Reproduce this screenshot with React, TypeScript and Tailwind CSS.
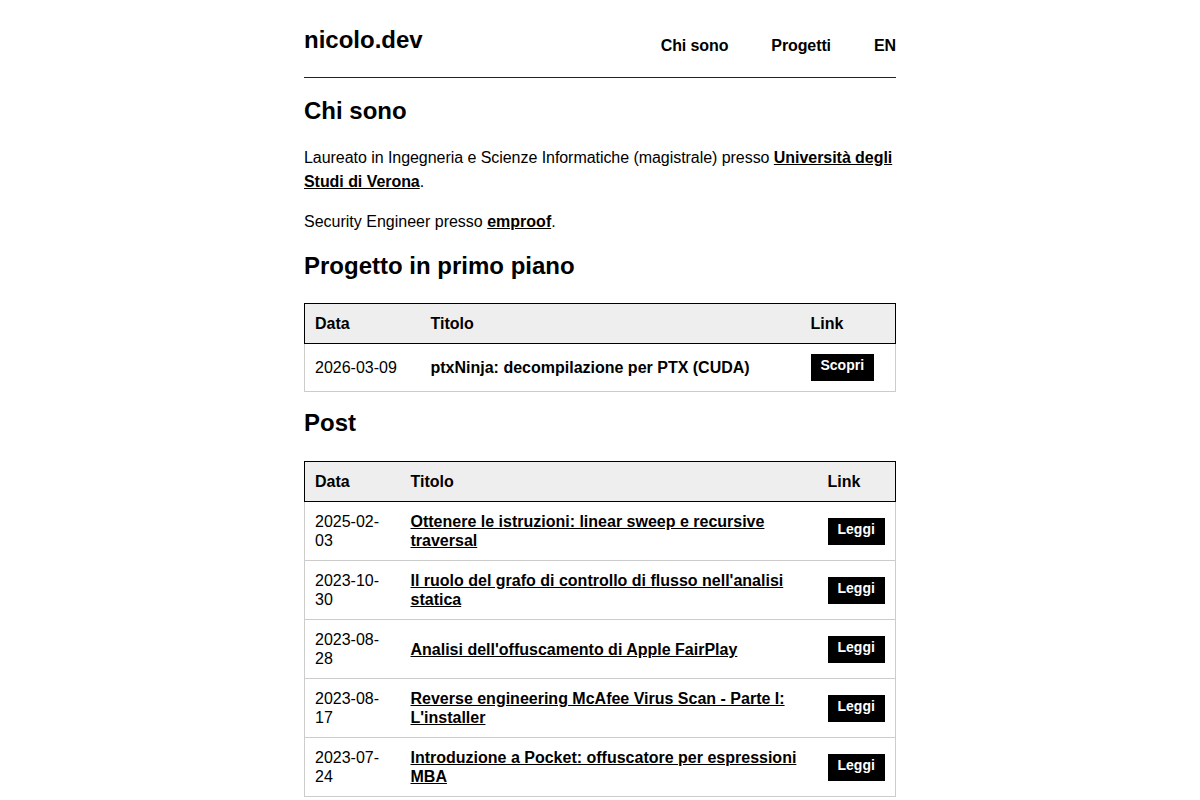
const posts = [
  { date: "2025-02-03", title: "Ottenere le istruzioni: linear sweep e recursive traversal" },
  { date: "2023-10-30", title: "Il ruolo del grafo di controllo di flusso nell'analisi statica" },
  { date: "2023-08-28", title: "Analisi dell'offuscamento di Apple FairPlay" },
  { date: "2023-08-17", title: "Reverse engineering McAfee Virus Scan - Parte I: L'installer" },
  { date: "2023-07-24", title: "Introduzione a Pocket: offuscatore per espressioni MBA" },
];

const Button = ({ label }: { label: string }) => (
  <a href="#" className="inline-block bg-black text-white font-bold text-[14px] leading-[17px] px-[10px] pt-[3px] pb-[7px] align-middle">
    {label}
  </a>
);

export default function App() {
  return (
    <div className="min-h-screen bg-white text-black font-['Liberation_Sans',Arial,sans-serif]">
      <div className="w-[592px] mx-auto">
        <header className="flex justify-between items-end pt-[26px] pb-[22px] border-b border-[#222]">
          <a href="#" className="text-[24px] leading-[1.2] font-bold">nicolo.dev</a>
          <nav className="flex gap-[43px] text-[16px] leading-[1.2] font-bold tracking-[-0.1px]">
            <a href="#">Chi sono</a>
            <a href="#">Progetti</a>
            <a href="#">EN</a>
          </nav>
        </header>

        <main className="text-[16px]">
          <h2 className="text-[24px] leading-[1.2] font-bold mt-[19px] mb-[20px]">Chi sono</h2>
          <p className="leading-[24px] tracking-[-0.05px]">
            Laureato in Ingegneria e Scienze Informatiche (magistrale) presso{" "}
            <a href="#" className="font-bold underline">Università degli Studi di Verona</a>.
          </p>
          <p className="leading-[24px] mt-[16px]">
            Security Engineer presso <a href="#" className="font-bold underline">emproof</a>.
          </p>

          <h2 className="text-[24px] leading-[1.2] font-bold mt-[18px] mb-[23px]">Progetto in primo piano</h2>
          <table className="w-full border-collapse leading-[19px] text-left">
            <thead>
              <tr className="bg-[#eee] border border-black">
                <th className="w-[116px] p-[10px] font-bold">Data</th>
                <th className="p-[10px] font-bold">Titolo</th>
                <th className="w-[95px] p-[10px] font-bold">Link</th>
              </tr>
            </thead>
            <tbody>
              <tr className="border border-[#ccc]">
                <td className="p-[10px]">2026-03-09</td>
                <td className="p-[10px] font-bold">ptxNinja: decompilazione per PTX (CUDA)</td>
                <td className="p-[10px]"><Button label="Scopri" /></td>
              </tr>
            </tbody>
          </table>

          <h2 className="text-[24px] leading-[1.2] font-bold mt-[17px] mb-[23px]">Post</h2>
          <table className="w-full border-collapse leading-[19px] text-left">
            <thead>
              <tr className="bg-[#eee] border border-black">
                <th className="w-[96px] p-[10px] font-bold">Data</th>
                <th className="p-[10px] font-bold">Titolo</th>
                <th className="w-[78px] p-[10px] font-bold">Link</th>
              </tr>
            </thead>
            <tbody>
              {posts.map((p) => (
                <tr key={p.date} className="border border-[#ccc]">
                  <td className="p-[10px]">{p.date}</td>
                  <td className="p-[10px]">
                    <a href="#" className="font-bold underline">{p.title}</a>
                  </td>
                  <td className="p-[10px]"><Button label="Leggi" /></td>
                </tr>
              ))}
            </tbody>
          </table>
        </main>
      </div>
    </div>
  );
}
